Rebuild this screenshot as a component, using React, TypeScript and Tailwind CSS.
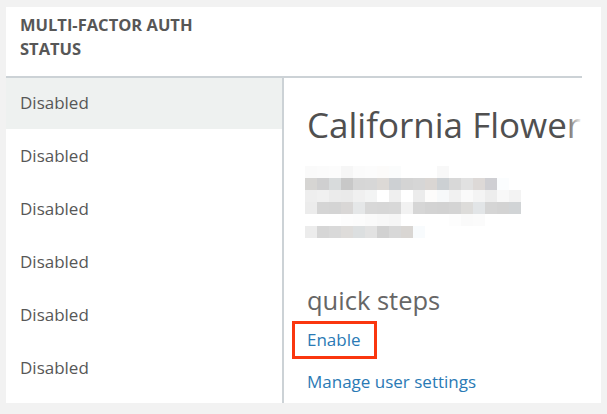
const rows = [
  "Disabled",
  "Disabled",
  "Disabled",
  "Disabled",
  "Disabled",
  "Disabled",
];

// pixelated (redacted) block under the title
const blur: string[][] = [
  ["#fafafa", "#fbfbfb", "#fcfcfc", "#f6f6f6", "#fbfbfb", "#fcfcfc", "#fcfbfa", "#fbfcfc", "#ffffff", "#ffffff", "#ffffff", "#f8f8f8", "#ffffff", "#ffffff", "#ffffff", "#ffffff"],
  ["#d6d5d3", "#cfcfd0", "#d8dbdc", "#c8c8c8", "#d6d6d6", "#d7d7d7", "#dcd9d6", "#cdd0d3", "#d4d4d4", "#d6d6d6", "#dad6d3", "#ccd0d3", "#d8d8d8", "#e1e1e1", "#ddd9d7", "#cfcfd3", "#fbfdfe"],
  ["#eeeeee", "#f0f0f0", "#ebebeb", "#eaeaea", "#f0f0f0", "#f3f4f4", "#ffffff", "#efefef", "#ffffff", "#ececec", "#fdfcfb", "#f7f9fa", "#f1f1f1", "#fafafa", "#f4f4f4", "#ededed", "#f8f8f8", "#f3f3f3"],
  ["#ececec", "#d5d5d5", "#d4d4d4", "#d9d7d6", "#e5e7e8", "#d8d8d8", "#d7d7d7", "#d8d8d8", "#f2f2f2", "#d6d6d6", "#d3d3d3", "#d2d2d2", "#d4d4d4", "#dddcda", "#e2e5e7", "#d5d5d5", "#d3d3d3", "#d1d4d6"],
  ["#ffffff", "#ffffff", "#ffffff", "#fdfdfd", "#fcfcfc", "#fafafa", "#f8f8f8", "#f6f6f6", "#ffffff", "#ffffff", "#ffffff", "#ffffff", "#fdfdfd", "#fafafa", "#fbfbfb"],
  ["#ececec", "#d6d6d6", "#d9d9d9", "#dedcda", "#dcdfe0", "#e2e2e2", "#d1d1d1", "#d8d8d8", "#d9d6d3", "#f8fbfd"],
];

export default function App() {
  return (
    <div className="w-[607px] h-[414px] bg-[#f2f2f2] pt-[7px] pl-[6px] font-['Open_Sans',sans-serif] text-[#575757]">
      <div className="w-[595px] h-[396px] bg-white flex flex-col overflow-hidden">
        {/* Header */}
        <div className="shrink-0 w-[576px] h-[71px] border-b-2 border-[#ccd2d6] pl-[14px] pt-[6px]">
          <div className="text-[16.5px] leading-[24px] font-bold uppercase w-[200px]">
            Multi-factor auth status
          </div>
        </div>

        <div className="flex flex-1 min-h-0">
          {/* Status column */}
          <div className="w-[278px] shrink-0 border-r-2 border-[#ccd2d6] flex flex-col">
            {rows.map((r, i) => (
              <div key={i} className="h-[53px] shrink-0 relative">
                {i === 0 && <div className="absolute inset-x-0 top-0 h-[51px] bg-[#eef1f0]" />}
                <div className="relative pl-[14px] pt-[13px] text-[17px] leading-[24px]">{r}</div>
              </div>
            ))}
          </div>

          {/* Detail pane */}
          <div className="relative w-[298px] shrink-0 overflow-hidden pl-[23px] pt-[25px]">
            <div className="whitespace-nowrap text-[35px] leading-[44px] text-[#505050]">
              California Flower
            </div>
            <div className="absolute right-0 top-[25px] h-[44px] w-[16px] bg-gradient-to-r from-white/0 to-white" />

            <div className="mt-[19px] ml-[-2px] flex flex-col">
              {blur.map((row, i) => (
                <div key={i} className="flex h-[12px]">
                  {row.map((c, j) => (
                    <div key={j} className="w-[12px] h-[12px]" style={{ backgroundColor: c }} />
                  ))}
                </div>
              ))}
            </div>

            <div className="mt-[46px] text-[25.5px] leading-[32px] text-[#666666]">quick steps</div>

            <div className="mt-[5px] ml-[-15px] w-[85px] h-[38px] border-[3px] border-[#fa360e] pl-[12px] flex items-center">
              <span className="text-[17px] leading-[24px] text-[#2a7ab5]">Enable</span>
            </div>

            <div className="mt-[11px] text-[17px] leading-[24px] text-[#2a7ab5] whitespace-nowrap">Manage user settings</div>
          </div>
        </div>
      </div>
    </div>
  );
}
